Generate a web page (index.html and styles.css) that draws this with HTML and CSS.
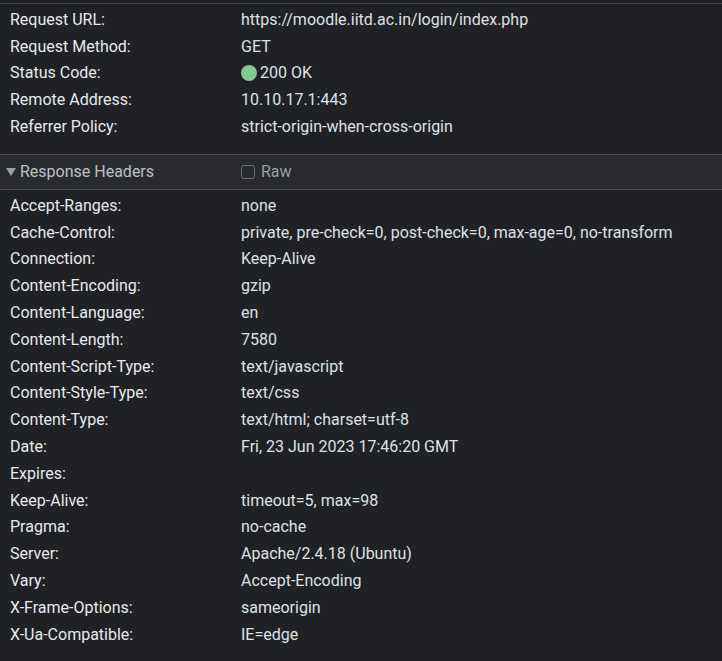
FILE: index.html
```html
<!DOCTYPE html>
<html>
<head>
<meta charset="utf-8">
<link rel="stylesheet" href="styles.css">
</head>
<body>
<div class="panel">
  <div class="section general">
    <div class="row"><span class="name">Request URL:</span><span class="value">https://moodle.iitd.ac.in/login/index.php</span></div>
    <div class="row"><span class="name">Request Method:</span><span class="value">GET</span></div>
    <div class="row"><span class="name">Status Code:</span><span class="value"><span class="dot"></span>200 OK</span></div>
    <div class="row"><span class="name">Remote Address:</span><span class="value">10.10.17.1:443</span></div>
    <div class="row"><span class="name">Referrer Policy:</span><span class="value">strict-origin-when-cross-origin</span></div>
  </div>
  <div class="header-bar">
    <div class="title"><span class="tri"></span>Response Headers</div>
    <label class="raw"><span class="box"></span>Raw</label>
  </div>
  <div class="section headers">
    <div class="row"><span class="name">Accept-Ranges:</span><span class="value">none</span></div>
    <div class="row"><span class="name">Cache-Control:</span><span class="value">private, pre-check=0, post-check=0, max-age=0, no-transform</span></div>
    <div class="row"><span class="name">Connection:</span><span class="value">Keep-Alive</span></div>
    <div class="row"><span class="name">Content-Encoding:</span><span class="value">gzip</span></div>
    <div class="row"><span class="name">Content-Language:</span><span class="value">en</span></div>
    <div class="row"><span class="name">Content-Length:</span><span class="value">7580</span></div>
    <div class="row"><span class="name">Content-Script-Type:</span><span class="value">text/javascript</span></div>
    <div class="row"><span class="name">Content-Style-Type:</span><span class="value">text/css</span></div>
    <div class="row"><span class="name">Content-Type:</span><span class="value">text/html; charset=utf-8</span></div>
    <div class="row"><span class="name">Date:</span><span class="value">Fri, 23 Jun 2023 17:46:20 GMT</span></div>
    <div class="row"><span class="name">Expires:</span><span class="value"></span></div>
    <div class="row"><span class="name">Keep-Alive:</span><span class="value">timeout=5, max=98</span></div>
    <div class="row"><span class="name">Pragma:</span><span class="value">no-cache</span></div>
    <div class="row"><span class="name">Server:</span><span class="value">Apache/2.4.18 (Ubuntu)</span></div>
    <div class="row"><span class="name">Vary:</span><span class="value">Accept-Encoding</span></div>
    <div class="row"><span class="name">X-Frame-Options:</span><span class="value">sameorigin</span></div>
    <div class="row"><span class="name">X-Ua-Compatible:</span><span class="value">IE=edge</span></div>
  </div>
</div>
</body>
</html>
```
FILE: styles.css
```css
html, body {
  margin: 0;
  background: #202124;
  height: 100%;
}
body {
  font-family: Roboto, "Noto Sans", sans-serif;
  font-size: 16px;
}
.panel {
  padding-top: 3px;
}
.section {
  border-top: 1px solid #3c3d41;
}
.general {
  padding: 2px 0 14px;
}
.headers {
  border-top: 1px solid #4a4c50;
  padding-top: 2px;
}
.row {
  display: grid;
  grid-template-columns: 231px 1fr;
  padding-left: 10px;
  height: 26.8px;
  align-items: center;
  white-space: nowrap;
}
.name {
  color: #e8eaed;
}
.value {
  color: #dfe1e5;
  display: flex;
  align-items: center;
}
.dot {
  width: 16px;
  height: 16px;
  border-radius: 50%;
  background: #81c995;
  margin-right: 3px;
}
.header-bar {
  display: grid;
  grid-template-columns: 240px 1fr;
  align-items: center;
  height: 34px;
  background: #292a2d;
  border-top: 1px solid #4a4c50;
  color: #bdc1c6;
}
.title {
  display: flex;
  align-items: center;
  padding-left: 6px;
}
.tri {
  width: 0;
  height: 0;
  border-left: 5px solid transparent;
  border-right: 5px solid transparent;
  border-top: 8px solid #9aa0a6;
  margin-right: 4px;
}
.raw {
  display: flex;
  align-items: center;
  color: #9aa0a6;
}
.box {
  width: 12px;
  height: 12px;
  border: 1.5px solid #6a6d72;
  border-radius: 3px;
  margin-right: 6px;
  margin-left: 1px;
}
```
